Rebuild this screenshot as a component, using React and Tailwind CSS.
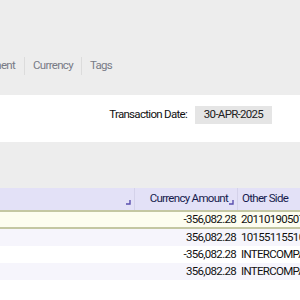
import React from 'react';

const rows = [
  { amount: '-356,082.28', other: '2011019050781', selected: true },
  { amount: '356,082.28', other: '1015511551023' },
  { amount: '-356,082.28', other: 'INTERCOMPANY' },
  { amount: '356,082.28', other: 'INTERCOMPANY' },
  { amount: '', other: '' },
];

const SortMark = () => (
  <svg width="5" height="5" viewBox="0 0 5 5" className="absolute right-[3px] bottom-[5px]">
    <path d="M4 0 V4 H0" fill="none" stroke="#5a4fae" strokeWidth="1.4" />
  </svg>
);

const App = () => {
  return (
    <div className="w-[300px] h-[300px] overflow-hidden bg-white font-['Roboto',sans-serif] text-[11.5px] tracking-[-0.7px]">
      {/* Tabs strip */}
      <div className="h-[95px] bg-[#ededed] flex flex-col justify-end pb-[20px]">
        <div className="flex items-center ml-[-37px] text-[#787b86] h-[18px]">
          <span className="pr-[9px] whitespace-nowrap">Adjustment</span>
          <span className="w-px h-[18px] bg-[#dcdcdc]"></span>
          <span className="px-[8px] whitespace-nowrap">Currency</span>
          <span className="w-px h-[18px] bg-[#dcdcdc]"></span>
          <span className="pl-[8px] whitespace-nowrap">Tags</span>
        </div>
      </div>

      {/* Transaction date */}
      <div className="h-[47px] flex items-center justify-end pr-[28px] pb-[8px] text-[#111]">
        <span className="mr-[8px]">Transaction Date:</span>
        <span className="w-[77px] h-[18px] bg-[#e5e5e5] flex items-center justify-center text-[#222]">30-APR-2025</span>
      </div>

      <div className="h-[46px] bg-[#ededed]"></div>

      {/* Grid */}
      <div className="flex h-[22px] bg-[#e3e1f7] text-[#151b4d]">
        <div className="relative w-[135px] border-r border-[#d4d2ea]">
          <SortMark />
        </div>
        <div className="relative w-[103px] border-r border-[#d4d2ea] flex items-center justify-end pr-[9px]">
          <span className="whitespace-nowrap">Currency Amount</span>
          <SortMark />
        </div>
        <div className="flex-1 flex items-center pl-[4px] whitespace-nowrap">Other Side</div>
      </div>

      {rows.map((r, i) => (
        <div
          key={i}
          className={
            r.selected
              ? 'flex h-[19px] bg-[#fdfdf0] border-y-2 border-[#c4c7a3] text-[#111]'
              : i % 2 === 1
              ? 'flex h-[17px] bg-[#f6f5fc] text-[#111]'
              : 'flex h-[17px] bg-white text-[#111]'
          }
        >
          <div className="w-[135px]"></div>
          <div className="w-[103px] flex items-center justify-end pr-[2px] whitespace-nowrap">{r.amount}</div>
          <div className="flex-1 flex items-center pl-[3px] whitespace-nowrap overflow-hidden">{r.other}</div>
        </div>
      ))}
    </div>
  );
};

export default App;
